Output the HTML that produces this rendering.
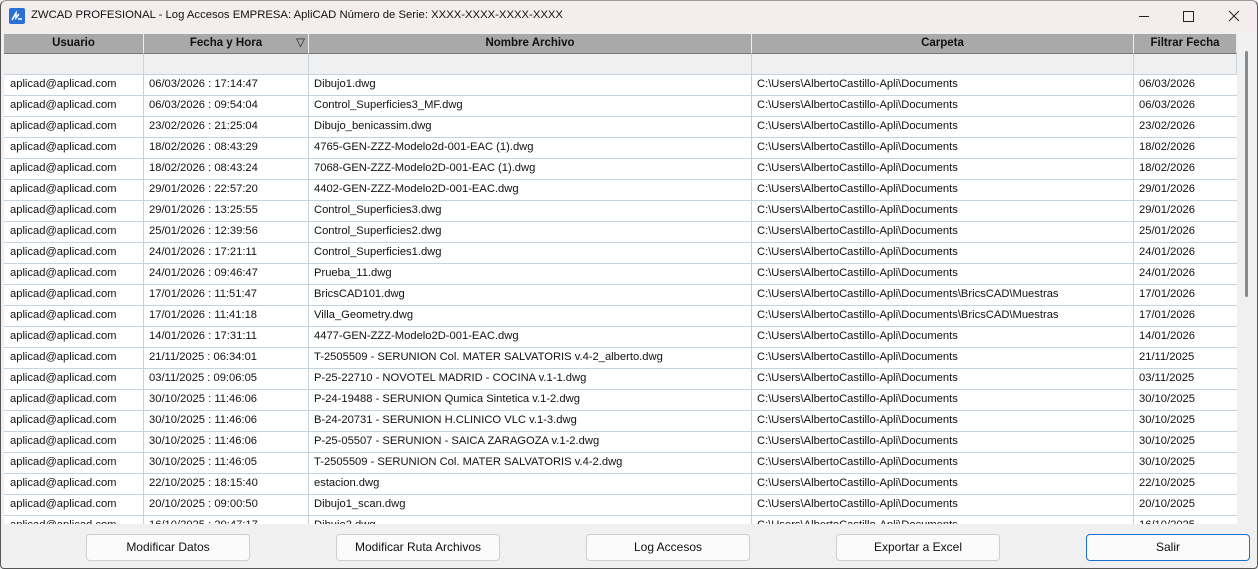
<!DOCTYPE html>
<html><head><meta charset="utf-8"><style>
*{margin:0;padding:0;box-sizing:border-box}
body{width:1258px;height:569px;overflow:hidden;background:#f0f0f0;font-family:"Liberation Sans",sans-serif;position:relative}
#title{position:absolute;left:0;top:0;width:1258px;height:32px;background:#f5eded;font-size:11.3px;color:#111}
#title .t{position:absolute;left:31px;top:9px}
#grid{position:absolute;left:4px;top:34px;width:1233px;height:490px;background:#fff;overflow:hidden}
.hdr{position:absolute;top:0;height:20px;background:#a9a9a9;border-right:1px solid #ececec;border-bottom:1px solid #777;font-weight:bold;font-size:11.5px;text-align:center;line-height:19px;color:#111}
.flt{position:absolute;top:20px;height:20px;background:#f0f0f0;border-right:1px solid #c8d4e0}
.row{position:absolute;left:0;width:1233px;height:21px;border-top:1px solid #c5d3e0;font-size:11.2px;color:#111}
.row span{position:absolute;white-space:nowrap;border-left:1px solid #c5d3e0;height:20px;top:0;line-height:19px;padding-left:5px}
.btn{position:absolute;top:534px;width:164px;height:27px;background:#fbfbfb;border:1px solid #cfcfcf;border-radius:4px;font-size:12px;text-align:center;line-height:25px;color:#111}
</style></head><body>
<div id="title">
<svg style="position:absolute;left:9px;top:8px" width="16" height="16"><rect width="16" height="16" rx="2" fill="#2a6fd6"/><path d="M3 12 L7 5 L7 10 L10 6 M9 11 h4" stroke="#fff" stroke-width="1.5" fill="none"/></svg>
<span class="t">ZWCAD PROFESIONAL - Log Accesos EMPRESA: ApliCAD Número de Serie: XXXX-XXXX-XXXX-XXXX</span>
<svg style="position:absolute;left:1136px;top:9px" width="110" height="14"><path d="M3 7.5h10" stroke="#222"/><rect x="47.5" y="2.5" width="10" height="10" fill="none" stroke="#222"/><path d="M93 2l10 10M103 2l-10 10" stroke="#222"/></svg>
</div>
<div id="grid">
<div class="hdr" style="left:0;width:140px">Usuario</div>
<div class="hdr" style="left:140px;width:165px">Fecha y Hora<span style="position:absolute;right:3px;font-weight:normal">▽</span></div>
<div class="hdr" style="left:305px;width:443px">Nombre Archivo</div>
<div class="hdr" style="left:748px;width:382px">Carpeta</div>
<div class="hdr" style="left:1130px;width:103px">Filtrar Fecha</div>
<div class="flt" style="left:0;width:140px"></div><div class="flt" style="left:140px;width:165px"></div><div class="flt" style="left:305px;width:443px"></div><div class="flt" style="left:748px;width:382px"></div><div class="flt" style="left:1130px;width:103px"></div>
<div id="rows"></div>
</div>
<div style="position:absolute;left:1245px;top:51px;width:3px;height:246px;background:#8a8a8a;border-radius:2px"></div>
<div class="btn" style="left:86px">Modificar Datos</div>
<div class="btn" style="left:336px">Modificar Ruta Archivos</div>
<div class="btn" style="left:586px">Log Accesos</div>
<div class="btn" style="left:836px">Exportar a Excel</div>
<div class="btn" style="left:1086px;border:1px solid #1f6fd0">Salir</div>
<div style="position:absolute;left:0;top:0;width:1258px;height:569px;border:1px solid #555;border-top-color:#999;border-radius:6px 6px 4px 4px;pointer-events:none"></div>
<script>
var d=[["06/03/2026 : 17:14:47","Dibujo1.dwg",""],["06/03/2026 : 09:54:04","Control_Superficies3_MF.dwg",""],["23/02/2026 : 21:25:04","Dibujo_benicassim.dwg",""],["18/02/2026 : 08:43:29","4765-GEN-ZZZ-Modelo2d-001-EAC (1).dwg",""],["18/02/2026 : 08:43:24","7068-GEN-ZZZ-Modelo2D-001-EAC (1).dwg",""],["29/01/2026 : 22:57:20","4402-GEN-ZZZ-Modelo2D-001-EAC.dwg",""],["29/01/2026 : 13:25:55","Control_Superficies3.dwg",""],["25/01/2026 : 12:39:56","Control_Superficies2.dwg",""],["24/01/2026 : 17:21:11","Control_Superficies1.dwg",""],["24/01/2026 : 09:46:47","Prueba_11.dwg",""],["17/01/2026 : 11:51:47","BricsCAD101.dwg","\\BricsCAD\\Muestras"],["17/01/2026 : 11:41:18","Villa_Geometry.dwg","\\BricsCAD\\Muestras"],["14/01/2026 : 17:31:11","4477-GEN-ZZZ-Modelo2D-001-EAC.dwg",""],["21/11/2025 : 06:34:01","T-2505509 - SERUNION Col. MATER SALVATORIS v.4-2_alberto.dwg",""],["03/11/2025 : 09:06:05","P-25-22710 - NOVOTEL MADRID - COCINA v.1-1.dwg",""],["30/10/2025 : 11:46:06","P-24-19488 - SERUNION Qumica Sintetica v.1-2.dwg",""],["30/10/2025 : 11:46:06","B-24-20731 - SERUNION H.CLINICO VLC v.1-3.dwg",""],["30/10/2025 : 11:46:06","P-25-05507 - SERUNION - SAICA ZARAGOZA v.1-2.dwg",""],["30/10/2025 : 11:46:05","T-2505509 - SERUNION Col. MATER SALVATORIS v.4-2.dwg",""],["22/10/2025 : 18:15:40","estacion.dwg",""],["20/10/2025 : 09:00:50","Dibujo1_scan.dwg",""],["16/10/2025 : 20:47:17","Dibujo2.dwg",""]];
var h="";d.forEach(function(r,i){h+='<div class="row" style="top:'+(40+i*21)+'px"><span style="left:0;border:0;padding-left:6px">aplicad@aplicad.com</span><span style="left:139px">'+r[0]+'</span><span style="left:304px">'+r[1]+'</span><span style="left:747px">C:\\Users\\AlbertoCastillo-Apli\\Documents'+r[2]+'</span><span style="left:1129px">'+r[0].slice(0,10)+'</span></div>'});
document.getElementById("rows").innerHTML=h;
</script>
</body></html>
